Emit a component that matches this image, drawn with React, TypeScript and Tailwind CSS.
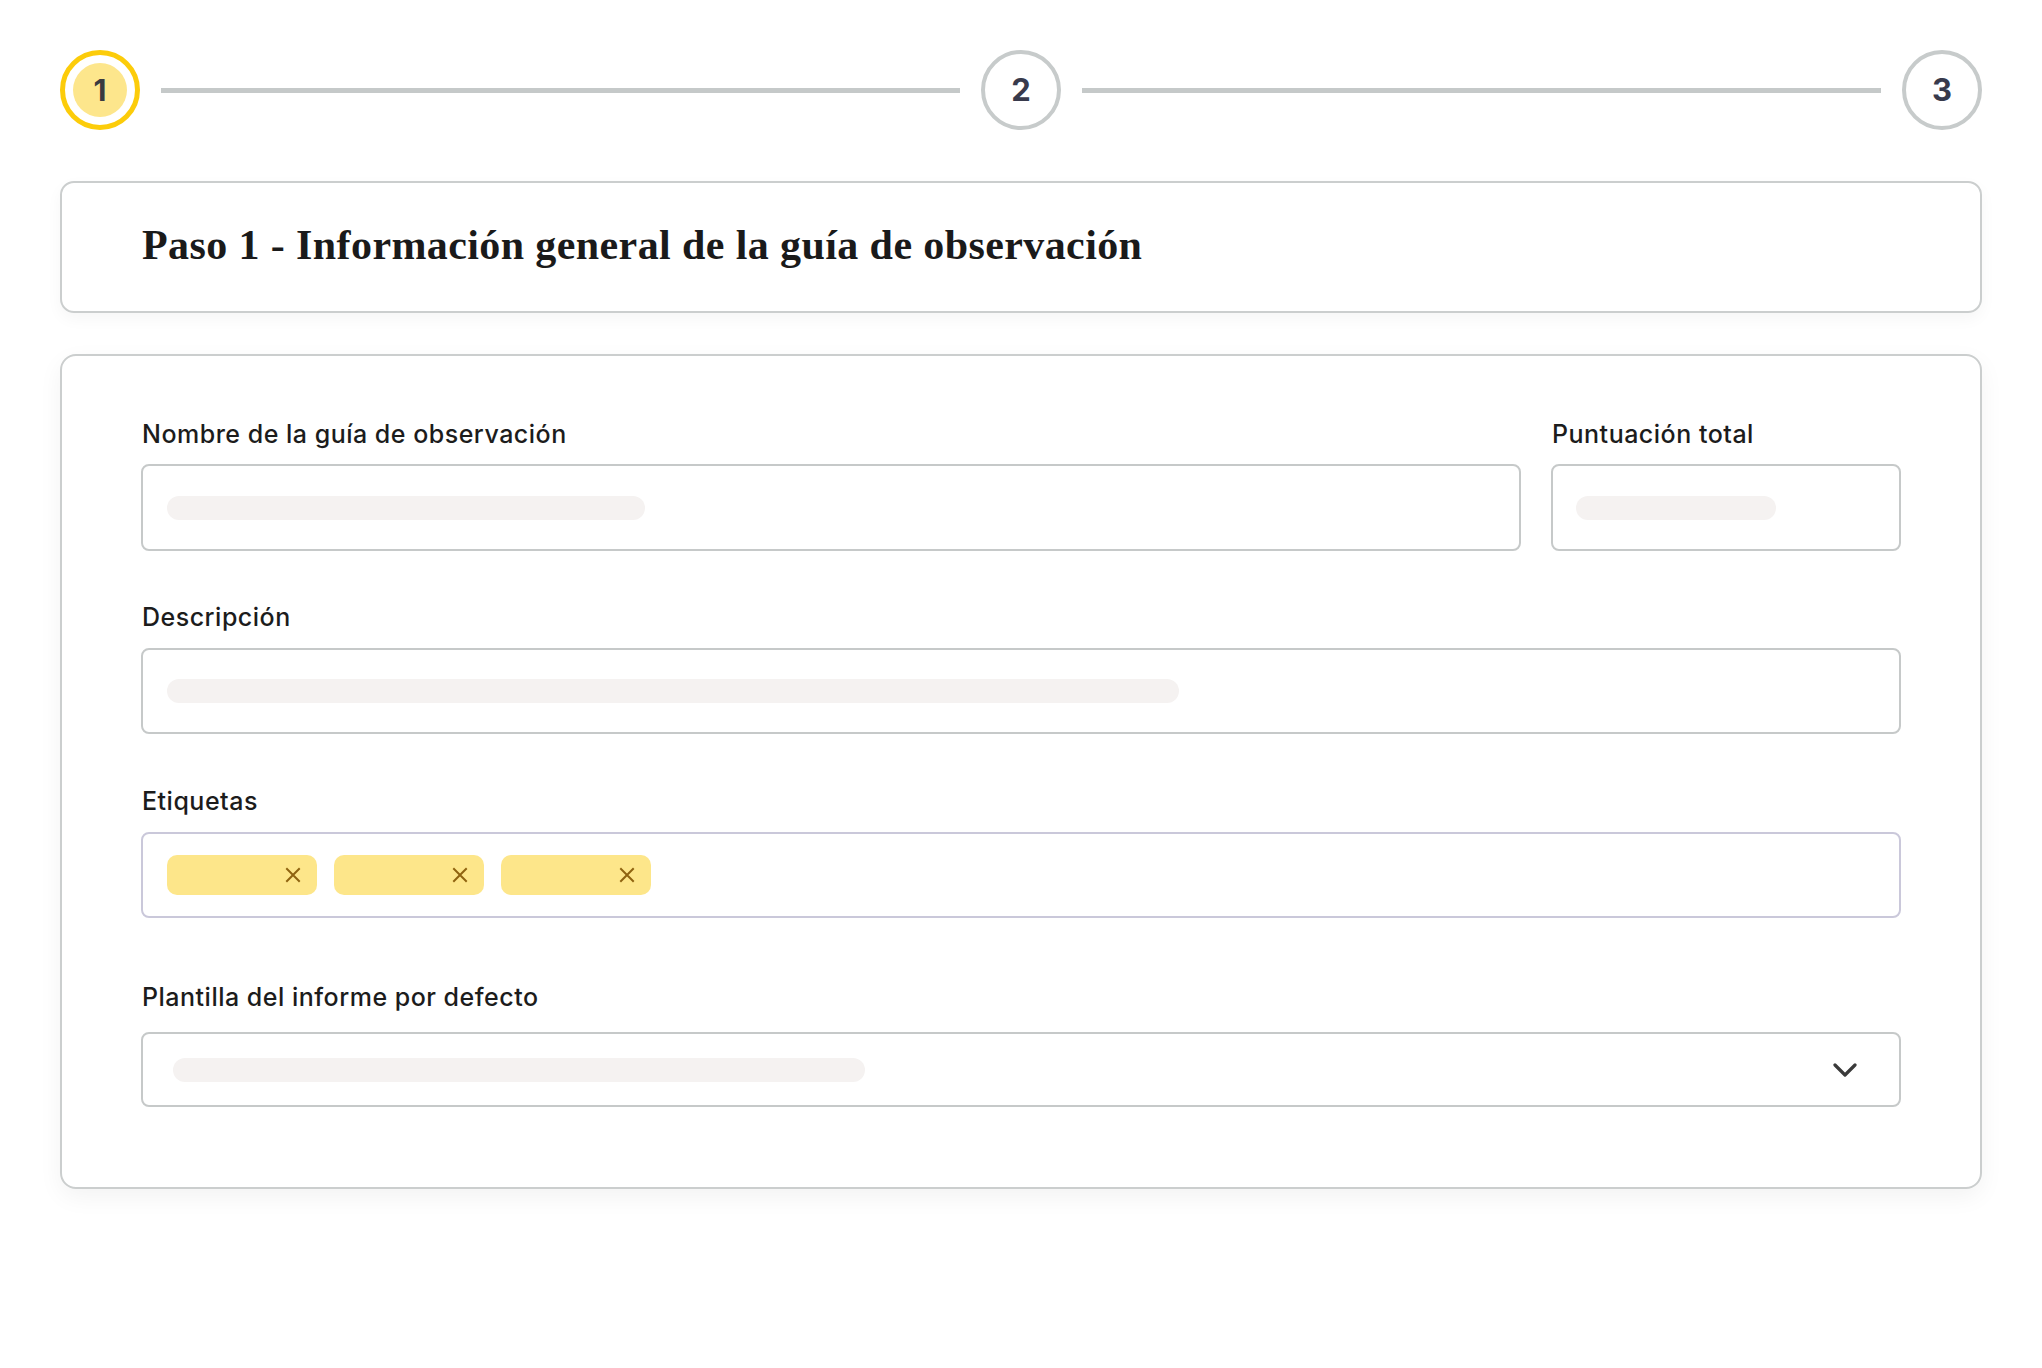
import React from "react";

const sans = { fontFamily: "Inter, 'Noto Sans', sans-serif" };
const serif = { fontFamily: "'Liberation Serif', 'DejaVu Serif', serif" };

function Label({ children }: { children: React.ReactNode }) {
  return (
    <div className="text-[25px] leading-[32px] font-medium text-[#1c1c1c] tracking-[0.5px] ml-[1px]" style={sans}>
      {children}
    </div>
  );
}

function Skeleton({ w }: { w: number }) {
  return <div className="h-[24px] rounded-full bg-[#f5f2f1]" style={{ width: w }} />;
}

function Tag() {
  return (
    <div className="w-[150px] h-[40px] rounded-[10px] bg-[#fde68a] flex items-center justify-end pr-[16px]">
      <svg width="16" height="16" viewBox="0 0 16 16" fill="none" stroke="#8f6310" strokeWidth="2" strokeLinecap="square">
        <path d="M2 2 L14 14 M14 2 L2 14" />
      </svg>
    </div>
  );
}

export default function App() {
  return (
    <div className="min-h-screen bg-white px-[60px] pt-[50px]" style={sans}>
      {/* stepper */}
      <div className="flex items-center">
        <div className="w-[80px] h-[80px] shrink-0 rounded-full border-[5px] border-[#fccc0a] flex items-center justify-center">
          <div className="w-[54px] h-[54px] rounded-full bg-[#fde68c] flex items-center justify-center text-[30px] font-bold text-[#3a3a40]">
            1
          </div>
        </div>
        <div className="flex-1 h-[5px] bg-[#c5c9c9] mx-[21px]" />
        <div className="w-[80px] h-[80px] shrink-0 rounded-full border-[4px] border-[#c7cbcb] flex items-center justify-center text-[31px] font-bold text-[#383a4c]">
          2
        </div>
        <div className="flex-1 h-[5px] bg-[#c5c9c9] mx-[21px]" />
        <div className="w-[80px] h-[80px] shrink-0 rounded-full border-[4px] border-[#c7cbcb] flex items-center justify-center text-[31px] font-bold text-[#383a4c]">
          3
        </div>
      </div>

      {/* step title */}
      <div className="mt-[51px] h-[132px] rounded-[14px] border-2 border-[#cbcece] flex items-center pl-[80px] shadow-[0_6px_16px_rgba(0,0,0,0.04)]">
        <h1 className="text-[42px] font-bold text-[#1a1a1a] leading-none tracking-[0.4px] mb-[5px]" style={serif}>
          Paso 1 - Información general de la guía de observación
        </h1>
      </div>

      {/* form */}
      <div className="mt-[41px] rounded-[16px] border-2 border-[#cbcece] px-[79px] pt-[62px] pb-[80px] shadow-[0_8px_24px_rgba(0,0,0,0.05)]">
        <div className="flex gap-[30px]">
          <div className="flex-1 flex flex-col gap-[14px]">
            <Label>Nombre de la guía de observación</Label>
            <div className="h-[87px] rounded-[8px] border-2 border-[#c6c9c9] flex items-center pl-[24px]">
              <Skeleton w={478} />
            </div>
          </div>
          <div className="w-[350px] flex flex-col gap-[14px]">
            <Label>Puntuación total</Label>
            <div className="h-[87px] rounded-[8px] border-2 border-[#c6c9c9] flex items-center pl-[23px]">
              <Skeleton w={200} />
            </div>
          </div>
        </div>

        <div className="mt-[50px] flex flex-col gap-[15px]">
          <Label>Descripción</Label>
          <div className="h-[86px] rounded-[8px] border-2 border-[#c6c9c9] flex items-center pl-[24px]">
            <Skeleton w={1012} />
          </div>
        </div>

        <div className="mt-[51px] flex flex-col gap-[15px]">
          <Label>Etiquetas</Label>
          <div className="h-[86px] rounded-[8px] border-2 border-[#cac8da] flex items-center pl-[24px] gap-[17px]">
            <Tag />
            <Tag />
            <Tag />
          </div>
        </div>

        <div className="mt-[63px] flex flex-col gap-[19px]">
          <Label>Plantilla del informe por defecto</Label>
          <div className="h-[75px] rounded-[8px] border-2 border-[#c6c9c9] flex items-center justify-between pl-[30px] pr-[42px]">
            <Skeleton w={692} />
            <svg width="24" height="14" viewBox="0 0 24 14" fill="none" stroke="#3a3a3a" strokeWidth="3.2" strokeLinecap="round" strokeLinejoin="round">
              <path d="M2 2 L12 12 L22 2" />
            </svg>
          </div>
        </div>
      </div>
    </div>
  );
}
